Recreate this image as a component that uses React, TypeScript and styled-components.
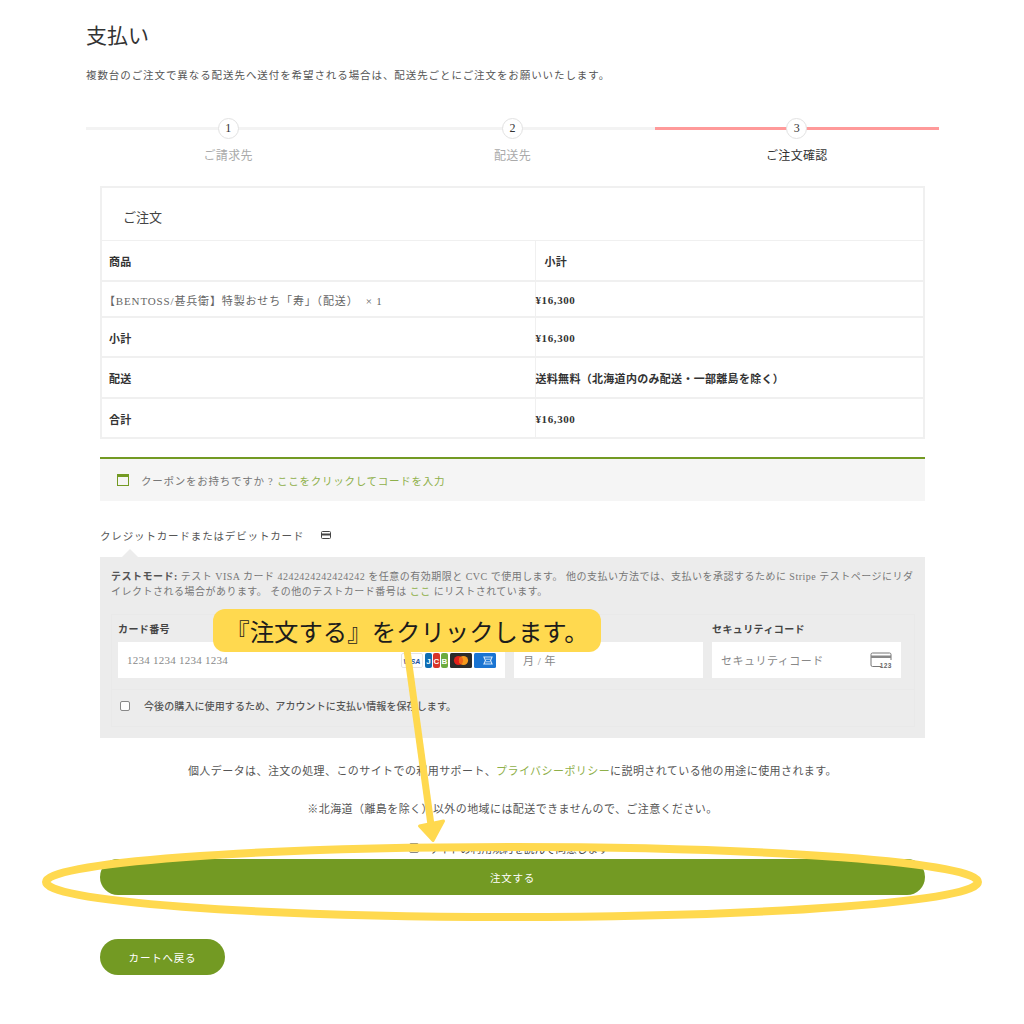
import React from 'react'
import styled, { createGlobalStyle } from 'styled-components'

const green = '#739a23'
const linkGreen = '#8fb04a'
const yellow = '#ffd94f'

const GlobalStyle = createGlobalStyle`
  html, body { margin: 0; padding: 0; background: #fff; }
  body {
    font-family: "Liberation Serif", "Noto Sans CJK JP", serif;
    color: #555;
  }
`

const Page = styled.div`
  position: relative;
  width: 1024px;
  height: 1024px;
  overflow: hidden;
  box-sizing: border-box;
  padding: 22px 85px 0 86px;
`

const Title = styled.h1`
  margin: 0;
  height: 28px;
  font-size: 21px;
  line-height: 28px;
  font-weight: 400;
  color: #333;
`

const Lead = styled.p`
  margin: 18px 0 0;
  font-size: 10.5px;
  line-height: 16px;
  letter-spacing: 0.92px;
  color: #555;
  white-space: nowrap;
`

const Steps = styled.div`
  display: grid;
  grid-template-columns: repeat(3, 1fr);
  margin-top: 34px;
`

const Step = styled.div<{ $active?: boolean }>`
  position: relative;
  display: flex;
  flex-direction: column;
  align-items: center;
  color: ${p => (p.$active ? '#333' : '#aaa')};
  font-size: 12px;
  &::before {
    content: '';
    position: absolute;
    left: 0;
    right: 0;
    top: 9px;
    height: 3px;
    background: ${p => (p.$active ? '#ff9a9a' : '#f3f3f3')};
  }
`

const StepNum = styled.span`
  position: relative;
  width: 19px;
  height: 19px;
  border: 1px solid #e2e2e2;
  border-radius: 50%;
  background: #fff;
  color: #333;
  font-size: 12px;
  line-height: 19px;
  text-align: center;
`

const StepLabel = styled.span`
  margin-top: 8px;
  line-height: 18px;
  letter-spacing: 0.3px;
`

const Content = styled.div`
  width: 825px;
  margin: 21px 0 0 14px;
`

const OrderTitle = styled.div`
  box-sizing: border-box;
  height: 55px;
  padding: 0 21px;
  border: 2px solid #f0f0f0;
  border-bottom-width: 1px;
  font-size: 13px;
  line-height: 60px;
  color: #444;
`

const OrderTable = styled.table`
  width: 100%;
  table-layout: fixed;
  border-collapse: collapse;
  font-size: 11px;
  color: #333;
`

const Row = styled.tr<{ $h: number }>`
  height: ${p => p.$h}px;
  border: 2px solid #f0f0f0;
  border-top: 0;
`

const Cell = styled.td<{ $strong?: boolean; $pad: number }>`
  box-sizing: border-box;
  padding: 1px 0 0 ${p => p.$pad}px;
  font-weight: ${p => (p.$strong ? 700 : 400)};
  letter-spacing: ${p => (p.$strong ? '0.3px' : '0.85px')};
  color: ${p => (p.$strong ? '#333' : '#666')};
  border-left: 1px solid #f0f0f0;
  white-space: pre;
  &:first-child { width: 434px; }
`

const Price = styled.span`
  letter-spacing: 0.6px;
`

const Coupon = styled.div`
  display: flex;
  align-items: center;
  box-sizing: border-box;
  height: 44px;
  margin-top: 18px;
  padding-left: 17px;
  background: #f5f5f5;
  border-top: 2px solid ${green};
  font-size: 10.5px;
  letter-spacing: 0.75px;
  color: #777;
`

const CouponIcon = styled.svg`
  width: 12px;
  height: 12px;
  margin-right: 12px;
`

const Link = styled.a`
  color: ${linkGreen};
`

const PayLabel = styled.div`
  display: flex;
  align-items: center;
  height: 16px;
  margin-top: 26px;
  font-size: 10.5px;
  letter-spacing: 0.85px;
  color: #555;
`

const PayIcon = styled.svg`
  width: 10px;
  height: 8px;
  margin-left: 17px;
`

const PayBox = styled.div`
  position: relative;
  box-sizing: border-box;
  height: 181px;
  margin-top: 14px;
  padding: 12px 10px 0 11px;
  background: #ececec;
  &::before {
    content: '';
    position: absolute;
    left: 22px;
    top: -8px;
    border-left: 8px solid transparent;
    border-right: 8px solid transparent;
    border-bottom: 8px solid #ececec;
  }
`

const TestNote = styled.p`
  margin: 0;
  font-size: 10px;
  line-height: 15px;
  letter-spacing: 0.49px;
  color: #777;
  white-space: nowrap;
`

const Strong = styled.strong`
  color: #555;
`

const Form = styled.div`
  box-sizing: border-box;
  height: 113px;
  margin-top: 15px;
  border: 1px solid #e9e9e9;
`

const Fields = styled.div`
  display: grid;
  grid-template-columns: 387px 189px 189px;
  column-gap: 9px;
  box-sizing: border-box;
  height: 75px;
  padding: 8px 0 0 6px;
  border-bottom: 1px solid #e9e9e9;
`

const FieldLabel = styled.div`
  height: 19px;
  font-size: 10px;
  font-weight: 700;
  line-height: 14px;
  letter-spacing: 0.4px;
  color: #444;
`

const Input = styled.div<{ $tight?: boolean }>`
  display: flex;
  align-items: center;
  justify-content: space-between;
  box-sizing: border-box;
  height: 36px;
  padding: 0 9px;
  background: #fff;
  font-size: 11px;
  letter-spacing: ${p => (p.$tight ? '0.25px' : '0.5px')};
  color: #888;
`

const Brands = styled.div`
  display: flex;
  gap: 2px;
`

const Save = styled.div`
  display: flex;
  align-items: center;
  height: 31px;
  padding-left: 8px;
  font-size: 10px;
  font-weight: 500;
  letter-spacing: 0.1px;
  color: #555;
`

const Box = styled.span<{ $gap: number }>`
  width: 8px;
  height: 8px;
  margin-right: ${p => p.$gap}px;
  border: 1px solid #888;
  border-radius: 2px;
  background: #fff;
`

const Notice = styled.p<{ $top: number }>`
  margin: ${p => p.$top}px 0 0;
  font-size: 11px;
  line-height: 16px;
  letter-spacing: 0.42px;
  text-align: center;
  color: #555;
  white-space: nowrap;
`

const Terms = styled.div`
  display: flex;
  align-items: center;
  justify-content: center;
  height: 12px;
  margin-top: 25px;
  padding-right: 7px;
  font-size: 10.5px;
  letter-spacing: 0.15px;
  color: #444;
`

const PlaceOrder = styled.button`
  display: block;
  width: 100%;
  height: 36px;
  margin: 5px 0 0;
  border: 0;
  border-radius: 18px;
  background: ${green};
  color: #fff;
  font: inherit;
  font-size: 10.5px;
  letter-spacing: 0.8px;
`

const BackButton = styled(PlaceOrder)`
  width: 125px;
  margin-top: 44px;
`

const Overlay = styled.svg`
  position: absolute;
  left: 0;
  top: 0;
  width: 1024px;
  height: 1024px;
  pointer-events: none;
`

const Callout = styled.div`
  position: absolute;
  left: 213px;
  top: 609px;
  box-sizing: border-box;
  width: 388px;
  height: 43px;
  border-radius: 12px;
  background: ${yellow};
  font-family: "Noto Sans CJK JP", "Noto Sans", sans-serif;
  font-size: 24.4px;
  line-height: 43px;
  text-align: center;
  color: #1c1c1c;
  white-space: nowrap;
`

const price = <Price>¥16,300</Price>

const rows = [
  { h: 40, a: '商品', b: '小計', strong: true, pa: 7, pb: 9 },
  { h: 36, a: '【BENTOSS/甚兵衛】特製おせち「寿」（配送）  × 1', b: price, pa: 2, pb: 0, bStrong: true },
  { h: 40, a: '小計', b: price, strong: true, pa: 7, pb: 0 },
  { h: 41, a: '配送', b: '送料無料（北海道内のみ配送・一部離島を除く）', strong: true, pa: 7, pb: 0 },
  { h: 40, a: '合計', b: price, strong: true, pa: 7, pb: 0 },
]

const App = () => {
  return (
    <Page>
      <GlobalStyle />
      <Title>支払い</Title>
      <Lead>複数台のご注文で異なる配送先へ送付を希望される場合は、配送先ごとにご注文をお願いいたします。</Lead>

      <Steps>
        <Step><StepNum>1</StepNum><StepLabel>ご請求先</StepLabel></Step>
        <Step><StepNum>2</StepNum><StepLabel>配送先</StepLabel></Step>
        <Step $active><StepNum>3</StepNum><StepLabel>ご注文確認</StepLabel></Step>
      </Steps>

      <Content>
        <OrderTitle>ご注文</OrderTitle>
        <OrderTable>
          <tbody>
            {rows.map((r, i) => (
              <Row key={i} $h={r.h}>
                <Cell $strong={r.strong} $pad={r.pa}>{r.a}</Cell>
                <Cell $strong={r.strong || r.bStrong} $pad={r.pb}>{r.b}</Cell>
              </Row>
            ))}
          </tbody>
        </OrderTable>

        <Coupon>
          <CouponIcon viewBox="0 0 12 12">
            <rect x="0.5" y="0.5" width="11" height="11" fill="none" stroke={green} />
            <rect x="0" y="0" width="12" height="3" fill={green} />
          </CouponIcon>
          クーポンをお持ちですか ?&nbsp;<Link>ここをクリックしてコードを入力</Link>
        </Coupon>

        <PayLabel>
          クレジットカードまたはデビットカード
          <PayIcon viewBox="0 0 10 8">
            <rect x="0.5" y="0.5" width="9" height="7" rx="1" fill="none" stroke="#444" />
            <rect x="0" y="2.5" width="10" height="2" fill="#444" />
          </PayIcon>
        </PayLabel>

        <PayBox>
          <TestNote>
            <Strong>テストモード:</Strong> テスト VISA カード 4242424242424242 を任意の有効期限と CVC で使用します。 他の支払い方法では、支払いを承認するために Stripe テストページにリダ
            <br />
            イレクトされる場合があります。 その他のテストカード番号は <Link>ここ</Link> にリストされています。
          </TestNote>
          <Form>
            <Fields>
              <div>
                <FieldLabel>カード番号</FieldLabel>
                <Input $tight>
                  1234 1234 1234 1234
                  <Brands>
                    <svg width="22" height="15" viewBox="0 0 22 15">
                      <rect x="0.5" y="0.5" width="21" height="14" rx="1.5" fill="#fff" stroke="#e4e4e4" />
                      <text x="11" y="10.5" textAnchor="middle" fontSize="7" fontWeight="700" fontStyle="italic" fontFamily="Liberation Sans" fill="#1a4fa0">VISA</text>
                    </svg>
                    <svg width="23" height="15" viewBox="0 0 23 15">
                      <rect x="0" y="0" width="7" height="15" rx="2" fill="#0e6db3" />
                      <rect x="8" y="0" width="7" height="15" rx="2" fill="#d8352a" />
                      <rect x="16" y="0" width="7" height="15" rx="2" fill="#6bab3f" />
                      <text x="3.5" y="10.5" textAnchor="middle" fontSize="8" fontWeight="700" fontFamily="Liberation Sans" fill="#fff">J</text>
                      <text x="11.5" y="10.5" textAnchor="middle" fontSize="8" fontWeight="700" fontFamily="Liberation Sans" fill="#fff">C</text>
                      <text x="19.5" y="10.5" textAnchor="middle" fontSize="8" fontWeight="700" fontFamily="Liberation Sans" fill="#fff">B</text>
                    </svg>
                    <svg width="22" height="15" viewBox="0 0 22 15">
                      <rect width="22" height="15" rx="1.5" fill="#2b2b2b" />
                      <circle cx="8.5" cy="7.5" r="4.6" fill="#e3201b" />
                      <circle cx="13.5" cy="7.5" r="4.6" fill="#f59a1c" />
                      <path d="M11 3.6a4.6 4.6 0 0 1 0 7.8a4.6 4.6 0 0 1 0-7.8z" fill="#f0641a" />
                    </svg>
                    <svg width="22" height="15" viewBox="0 0 22 15">
                      <rect width="22" height="15" rx="1.5" fill="#1a74d2" />
                      <path d="M10 4h8l-1.5 3.5 1.5 3.5h-8l1.5-3.5z" fill="none" stroke="#cfe3f7" strokeWidth="1.2" />
                      <path d="M12 6.2h4M12 8.8h4" stroke="#cfe3f7" strokeWidth="0.9" />
                    </svg>
                  </Brands>
                </Input>
              </div>
              <div>
                <FieldLabel>&nbsp;</FieldLabel>
                <Input>月 / 年</Input>
              </div>
              <div>
                <FieldLabel>セキュリティコード</FieldLabel>
                <Input>
                  セキュリティコード
                  <svg width="22" height="16" viewBox="0 0 22 16">
                    <path d="M11 14.5H2.5a1.5 1.5 0 0 1-1.5-1.5V2.5A1.5 1.5 0 0 1 2.5 1h17A1.5 1.5 0 0 1 21 2.5V8" fill="none" stroke="#777" />
                    <rect x="1" y="3.5" width="20" height="2.5" fill="#888" />
                    <text x="22" y="15.5" textAnchor="end" fontSize="6.5" fontWeight="700" fontFamily="Liberation Sans" fill="#666">123</text>
                  </svg>
                </Input>
              </div>
            </Fields>
            <Save>
              <Box $gap={14} />
              今後の購入に使用するため、アカウントに支払い情報を保存します。
            </Save>
          </Form>
        </PayBox>

        <Notice $top={25}>
          個人データは、注文の処理、このサイトでの利用サポート、<Link>プライバシーポリシー</Link>に説明されている他の用途に使用されます。
        </Notice>
        <Notice $top={22}>※北海道（離島を除く）以外の地域には配送できませんので、ご注意ください。</Notice>

        <Terms>
          <Box $gap={9} />
          サイトの利用規約を読んで同意します
        </Terms>
        <PlaceOrder>注文する</PlaceOrder>
        <BackButton>カートへ戻る</BackButton>
      </Content>

      <Overlay viewBox="0 0 1024 1024">
        <ellipse cx="512" cy="882" rx="466" ry="35" fill="none" stroke={yellow} strokeWidth="8" />
        <path d="M407 650L431 825" stroke={yellow} strokeWidth="7" fill="none" />
        <path d="M419.5 826L443.5 821L433 840.5z" fill={yellow} stroke={yellow} strokeWidth="3" strokeLinejoin="round" />
      </Overlay>
      <Callout>『注文する』をクリックします。</Callout>
    </Page>
  )
}

export default App
